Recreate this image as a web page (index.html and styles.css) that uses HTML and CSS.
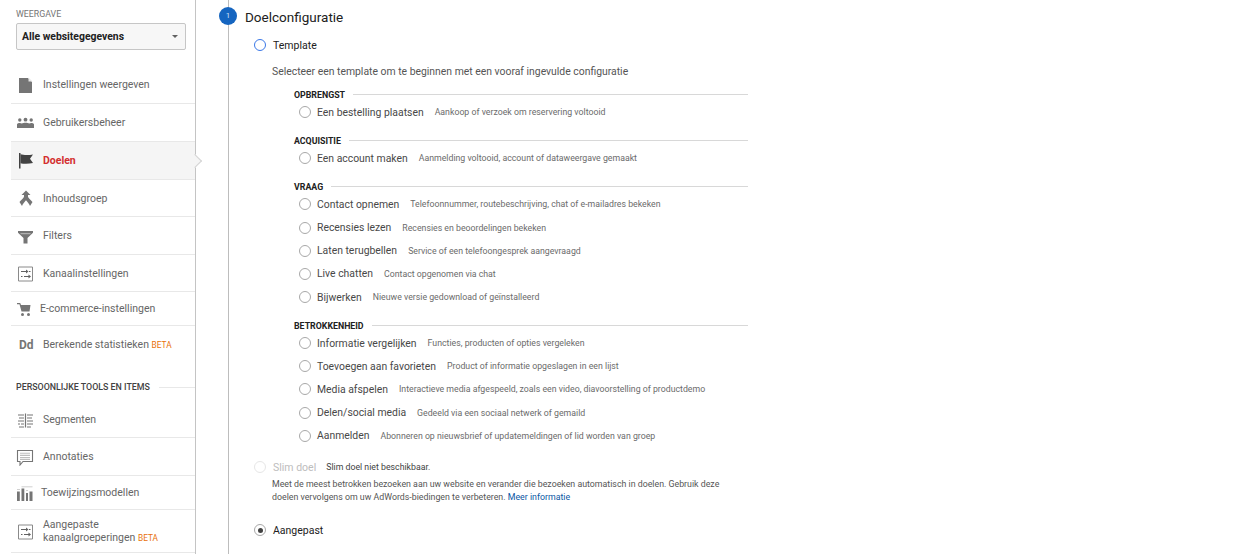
FILE: index.html
```html
<!DOCTYPE html>
<html lang="en">
<head>
    <meta charset="UTF-8">
    <title>Doelconfiguratie</title>
    <link rel="stylesheet" href="styles.css">
</head>
<body>
    <aside class="sidebar">
        <div class="view-label">WEERGAVE</div>
        <div class="view-select">
            <span>Alle websitegegevens</span>
            <span class="caret"></span>
        </div>

        <nav class="nav nav-top">
            <a class="nav-item">
                <svg class="nav-icon" viewBox="0 0 18 18"><path d="M3 2h9l4 4v11H3z" fill="#757575"/><path d="M12.500 1.500l4 4h-4z" fill="#e6e6e6"/></svg>
                <span>Instellingen weergeven</span>
            </a>
            <a class="nav-item">
                <svg class="nav-icon" viewBox="0 0 18 18"><g fill="#757575"><circle cx="3.800" cy="6" r="1.700"/><circle cx="9.500" cy="5.700" r="1.900"/><circle cx="15.200" cy="6" r="1.700"/><path d="M1 14v-3.500c0-1 1.300-1.500 2.800-1.500 .8 0 1.500.2 2 .5 .8-.5 2.300-.8 3.700-.8s2.900.3 3.700.8c.5-.3 1.200-.5 2-.5 1.500 0 2.800.5 2.800 1.500V14z"/></g></svg>
                <span>Gebruikersbeheer</span>
            </a>
            <a class="nav-item active">
                <svg class="nav-icon" viewBox="0 0 18 18"><path d="M3 1h1.500v15.500H3z" fill="#424242"/><path d="M4.500 2.200c3 .9 8 1 12.500 .2l-3 4.300 3 4.300c-4 1-9.500 1-12.500 .2z" fill="#424242"/></svg>
                <span>Doelen</span>
            </a>
            <a class="nav-item h37">
                <svg class="nav-icon" viewBox="0 0 18 18"><path d="M10 1.500l4.500 4.500H12v1.500c0 1.500 3.500 4 4.500 5.500L14 17c-.5-2-2.800-4.200-4-5.700-1.200 1.500-3.500 3.700-4 5.700l-2.500-4c1-1.500 4.500-4 4.500-5.500V6H5.500z" fill="#757575"/></svg>
                <span>Inhoudsgroep</span>
            </a>
            <a class="nav-item">
                <svg class="nav-icon" viewBox="0 0 18 18"><path d="M2 4h15v1.800l-5.500 5.200v5.500h-4V11L2 5.800z" fill="#757575"/><path d="M4.500 6.700h10" stroke="#d0d0d0" stroke-width=".8"/></svg>
                <span>Filters</span>
            </a>
            <a class="nav-item h37">
                <svg class="nav-icon" viewBox="0 0 18 18"><path d="M2.500 3h14v14h-14z" fill="none" stroke="#8a8a8a"/><path d="M5 7.500h5.500M13 7.500h1.500M5 12.500h1.500M8 12.500h5" stroke="#616161" stroke-width="1.100"/><path d="M10 5.500l2.500 2-2.500 2zM12.500 10.500l2.500 2-2.500 2z" fill="#616161"/></svg>
                <span>Kanaalinstellingen</span>
            </a>
            <a class="nav-item h34">
                <svg class="nav-icon cart" viewBox="0 0 18 18"><path d="M1 3h3.200l.8 2h9.500l-1 6.500H5.500L3.500 4.200H1z" fill="#757575"/><circle cx="6.500" cy="14.500" r="1.500" fill="#757575"/><circle cx="12.500" cy="14.500" r="1.500" fill="#757575"/></svg>
                <span>E-commerce-instellingen</span>
            </a>
            <a class="nav-item plain">
                <span class="dd">Dd</span>
                <span>Berekende statistieken <em class="beta">BETA</em></span>
            </a>
        </nav>

        <div class="tools-head">
            <span>PERSOONLIJKE TOOLS EN ITEMS</span>
        </div>

        <nav class="nav">
            <a class="nav-item lowered">
                <svg class="nav-icon" viewBox="0 1 18 18"><path d="M2 5h6M3 8h5M2 11h6M5 14h3M2 14h2M3 17h5M11 5h6M11 8h5M11 11h6M11 14h6M11 17h4" stroke="#757575" stroke-width="1.100" fill="none"/><path d="M9.500 3.500v14" stroke="#757575" stroke-width="1.200"/></svg>
                <span>Segmenten</span>
            </a>
            <a class="nav-item">
                <svg class="nav-icon" viewBox="0 0 18 18"><path d="M1.500 2.500h15v11H7L4 17v-3.500H1.500z" fill="none" stroke="#757575" stroke-width="1.100"/><path d="M4 5.200h10M4 7.400h10M4 9.600h10M4 11.500h10" stroke="#bdbdbd" stroke-width="1.100"/></svg>
                <span>Annotaties</span>
            </a>
            <a class="nav-item h34">
                <svg class="nav-icon bars" viewBox="0 0 18 18"><path d="M1 7.500h2.800V17H1zM5.500 4.500h2.800V17H5.500zM10 9h2V17h-2zM13.500 7.500h3V17h-3z" fill="#757575"/><path d="M5.500 2.800h11M1 5.500h3M10 6.500h2" stroke="#c4c4c4" stroke-width=".8"/></svg>
                <span>Toewijzingsmodellen</span>
            </a>
            <a class="nav-item two-line">
                <svg class="nav-icon" viewBox="0 0 18 18"><path d="M2.500 3h14v14h-14z" fill="none" stroke="#8a8a8a"/><path d="M5 7.500h5.500M13 7.500h1.500M5 12.500h1.500M8 12.500h5" stroke="#616161" stroke-width="1.100"/><path d="M10 5.500l2.500 2-2.500 2zM12.500 10.500l2.500 2-2.500 2z" fill="#616161"/></svg>
                <span>Aangepaste<br>kanaalgroeperingen <em class="beta">BETA</em></span>
            </a>
        </nav>
    </aside>

    <main class="content">
        <section class="step">
            <span class="step-num">1</span>
            <h2>Doelconfiguratie</h2>

            <div class="choice template">
                <span class="radio blue"></span>
                <label>Template</label>
            </div>
            <p class="intro">Selecteer een template om te beginnen met een vooraf ingevulde configuratie</p>

            <div class="group">
                <h3><span>OPBRENGST</span></h3>
                <div class="option"><span class="radio"></span><label>Een bestelling plaatsen</label><small>Aankoop of verzoek om reservering voltooid</small></div>
            </div>

            <div class="group">
                <h3><span>ACQUISITIE</span></h3>
                <div class="option"><span class="radio"></span><label>Een account maken</label><small>Aanmelding voltooid, account of dataweergave gemaakt</small></div>
            </div>

            <div class="group">
                <h3><span>VRAAG</span></h3>
                <div class="option"><span class="radio"></span><label>Contact opnemen</label><small>Telefoonnummer, routebeschrijving, chat of e-mailadres bekeken</small></div>
                <div class="option"><span class="radio"></span><label>Recensies lezen</label><small>Recensies en beoordelingen bekeken</small></div>
                <div class="option"><span class="radio"></span><label>Laten terugbellen</label><small>Service of een telefoongesprek aangevraagd</small></div>
                <div class="option"><span class="radio"></span><label>Live chatten</label><small>Contact opgenomen via chat</small></div>
                <div class="option"><span class="radio"></span><label>Bijwerken</label><small>Nieuwe versie gedownload of geïnstalleerd</small></div>
            </div>

            <div class="group">
                <h3><span>BETROKKENHEID</span></h3>
                <div class="option"><span class="radio"></span><label>Informatie vergelijken</label><small>Functies, producten of opties vergeleken</small></div>
                <div class="option"><span class="radio"></span><label>Toevoegen aan favorieten</label><small>Product of informatie opgeslagen in een lijst</small></div>
                <div class="option"><span class="radio"></span><label>Media afspelen</label><small>Interactieve media afgespeeld, zoals een video, diavoorstelling of productdemo</small></div>
                <div class="option"><span class="radio"></span><label>Delen/social media</label><small>Gedeeld via een sociaal netwerk of gemaild</small></div>
                <div class="option"><span class="radio"></span><label>Aanmelden</label><small>Abonneren op nieuwsbrief of updatemeldingen of lid worden van groep</small></div>
            </div>

            <div class="choice smart">
                <span class="radio faded"></span>
                <label>Slim doel</label>
                <small>Slim doel niet beschikbaar.</small>
            </div>
            <p class="smart-text">Meet de meest betrokken bezoeken aan uw website en verander die bezoeken automatisch in doelen. Gebruik deze doelen vervolgens om uw AdWords-biedingen te verbeteren. <a href="#">Meer informatie</a></p>

            <div class="choice custom">
                <span class="radio checked"></span>
                <label>Aangepast</label>
            </div>
        </section>
    </main>
</body>
</html>
```

FILE: styles.css
```css
* {
    margin: 0;
    padding: 0;
    box-sizing: border-box;
}

html, body {
    height: 554px;
    overflow: hidden;
}

body {
    display: flex;
    background: #fff;
    color: #212121;
    font-family: Roboto, "Liberation Sans", sans-serif;
}

.sidebar {
    width: 196px;
    height: 554px;
    flex: none;
    border-right: 1px solid #c4c4c4;
    padding-left: 11px;
}

.view-label {
    margin: 8px 0 0 5px;
    height: 12px;
    font-size: 8.800px;
    line-height: 12px;
    color: #757575;
}

.view-select {
    display: flex;
    align-items: center;
    justify-content: space-between;
    width: 170px;
    height: 27px;
    margin: 3px 0 0 5px;
    padding: 0 7px 0 5px;
    border: 1px solid #c6c6c6;
    border-radius: 2px;
    background: #f7f7f7;
    font-size: 10.400px;
    font-weight: 700;
    color: #212121;
}

.caret {
    border-left: 3px solid transparent;
    border-right: 3px solid transparent;
    border-top: 3px solid #616161;
}

.nav {
    display: flex;
    flex-direction: column;
}

.nav-top {
    margin-top: 16px;
}

.nav-item {
    position: relative;
    display: flex;
    align-items: center;
    height: 38px;
    padding-left: 5px;
    border-bottom: 1px solid #e8e8e8;
    font-size: 10.500px;
    color: #666;
}

.nav-item.h37 {
    height: 37px;
}

.nav-item.h34 {
    height: 34px;
}

.nav-item.plain {
    padding-bottom: 1px;
    border-bottom: none;
}

.nav-item.lowered {
    padding-top: 2px;
}

.nav-item.two-line {
    height: 43px;
    line-height: 13px;
}

.nav-item.active {
    background: #f5f5f5;
    font-weight: 700;
    color: #d32f2f;
}

/* little arrow poking through the sidebar border */
.nav-item.active::after {
    content: "";
    position: absolute;
    right: -5px;
    top: 14px;
    width: 9px;
    height: 9px;
    background: #f5f5f5;
    border-top: 1px solid #d4d4d4;
    border-right: 1px solid #d4d4d4;
    transform: rotate(45deg);
}

.nav-icon {
    flex: none;
    width: 18px;
    height: 18px;
    margin-right: 9px;
}

.nav-icon.cart {
    margin-right: 6px;
}

.nav-icon.bars {
    margin-right: 7px;
}

.dd {
    flex: none;
    width: 27px;
    padding-left: 3px;
    font-size: 12px;
    font-weight: 700;
    color: #757575;
}

.beta {
    font-style: normal;
    font-size: 8.300px;
    color: #e8710a;
}

.tools-head {
    display: flex;
    align-items: center;
    margin: 16px 0 6px 5px;
    height: 14px;
    font-size: 8.850px;
    font-weight: 500;
    color: #424242;
}

.tools-head::after {
    content: "";
    flex: 1;
    height: 1px;
    margin-left: 9px;
    background: #e8e8e8;
}

.content {
    flex: 1;
    padding-left: 32px;
}

.step {
    position: relative;
    height: 554px;
    border-left: 1px solid #bdbdbd;
    padding-left: 16px;
}

.step-num {
    position: absolute;
    left: -10px;
    top: 7px;
    width: 18px;
    height: 18px;
    border-radius: 50%;
    background: #1565c0;
    color: #cfe0f5;
    font-size: 8px;
    line-height: 18px;
    text-align: center;
}

h2 {
    padding-top: 8px;
    height: 28px;
    font-size: 13.500px;
    line-height: 18px;
    font-weight: 400;
    color: #212121;
}

.radio {
    flex: none;
    position: relative;
    width: 12px;
    height: 12px;
    border-radius: 50%;
    border: 1px solid #a8a8a8;
    background: #fff;
}

.radio.blue {
    border-color: #3b78e7;
}

.radio.faded {
    border-color: #e6e6e6;
}

.radio.checked::after {
    content: "";
    position: absolute;
    left: 2.500px;
    top: 2.500px;
    width: 5px;
    height: 5px;
    border-radius: 50%;
    background: #424242;
}

.choice {
    display: flex;
    align-items: center;
    margin-left: 9px;
    font-size: 10.500px;
}

.choice .radio {
    margin-right: 7px;
}

.template {
    margin-top: 10px;
    height: 14px;
}

.intro {
    margin: 13px 0 0 27px;
    height: 13px;
    font-size: 10.400px;
    line-height: 13px;
    color: #555;
}

.group {
    margin-left: 49px;
    width: 454px;
}

.group h3 {
    display: flex;
    align-items: center;
    margin-top: 10.800px;
    height: 12px;
    font-size: 8.800px;
    font-weight: 700;
    color: #212121;
}

.group h3::after {
    content: "";
    flex: 1;
    height: 1px;
    margin-left: 8px;
    background: #d8d8d8;
}

.option {
    display: flex;
    align-items: center;
    height: 23.200px;
    margin-left: 5px;
    font-size: 10.400px;
    color: #484848;
}

.option .radio {
    margin-right: 6px;
}

.option small {
    margin-left: 11px;
    font-size: 8.750px;
    color: #6b6b6b;
}

.smart {
    margin-top: 13px;
    height: 14px;
}

.smart label {
    color: #bdbdbd;
}

.smart small {
    margin-left: 10px;
    font-size: 8.750px;
    color: #424242;
}

.smart-text {
    width: 470px;
    margin: 4px 0 0 27px;
    font-size: 8.800px;
    line-height: 13px;
    color: #555;
}

.smart-text a {
    color: #0b57a4;
    text-decoration: none;
}

.custom {
    margin-top: 19px;
    height: 14px;
}
```
